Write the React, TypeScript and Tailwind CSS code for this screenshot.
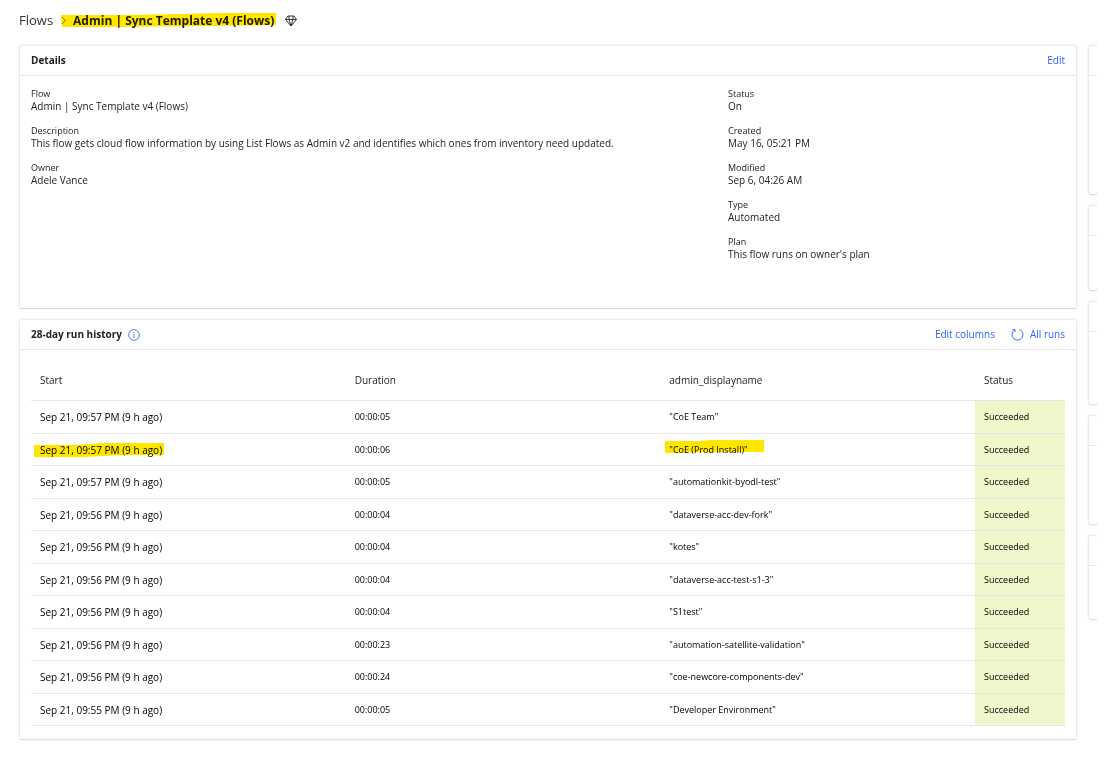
import type { ReactNode } from 'react';

type Run = {
  start: string;
  duration: string;
  name: string;
  marked?: boolean;
};

const runs: Run[] = [
  { start: 'Sep 21, 09:57 PM (9 h ago)', duration: '00:00:05', name: '"CoE Team"' },
  { start: 'Sep 21, 09:57 PM (9 h ago)', duration: '00:00:06', name: '"CoE (Prod Install)"', marked: true },
  { start: 'Sep 21, 09:57 PM (9 h ago)', duration: '00:00:05', name: '"automationkit-byodl-test"' },
  { start: 'Sep 21, 09:56 PM (9 h ago)', duration: '00:00:04', name: '"dataverse-acc-dev-fork"' },
  { start: 'Sep 21, 09:56 PM (9 h ago)', duration: '00:00:04', name: '"kotes"' },
  { start: 'Sep 21, 09:56 PM (9 h ago)', duration: '00:00:04', name: '"dataverse-acc-test-s1-3"' },
  { start: 'Sep 21, 09:56 PM (9 h ago)', duration: '00:00:04', name: '"S1test"' },
  { start: 'Sep 21, 09:56 PM (9 h ago)', duration: '00:00:23', name: '"automation-satellite-validation"' },
  { start: 'Sep 21, 09:56 PM (9 h ago)', duration: '00:00:24', name: '"coe-newcore-components-dev"' },
  { start: 'Sep 21, 09:55 PM (9 h ago)', duration: '00:00:05', name: '"Developer Environment"' },
];

const leftDetails = [
  ['Flow', 'Admin | Sync Template v4 (Flows)'],
  ['Description', 'This flow gets cloud flow information by using List Flows as Admin v2 and identifies which ones from inventory need updated.'],
  ['Owner', 'Adele Vance'],
];

const rightDetails = [
  ['Status', 'On'],
  ['Created', 'May 16, 05:21 PM'],
  ['Modified', 'Sep 6, 04:26 AM'],
  ['Type', 'Automated'],
  ['Plan', "This flow runs on owner's plan"],
];

// Body heights of the side cards, below their 30px headers
const sideCards = ['h-[118px]', 'h-[54px]', 'h-[72px]', 'h-[78px]', 'h-[53px]'];

function Card({ header, children }: { header?: ReactNode; children?: ReactNode }) {
  return (
    <section className="rounded-xs bg-white shadow-[0_0_2px_1px_rgba(0,0,0,0.11),0_1px_1px_rgba(0,0,0,0.06)]">
      <div className="flex h-[30px] items-center justify-between border-b border-[#e6e6e6] px-[11px]">
        {header}
      </div>
      {children}
    </section>
  );
}

function DetailList({ items }: { items: string[][] }) {
  return (
    <dl className="space-y-3">
      {items.map(([label, value]) => (
        <div key={label}>
          <dt className="text-[9px] leading-3 font-medium">{label}</dt>
          <dd className="text-[10px] leading-[13px] whitespace-nowrap">{value}</dd>
        </div>
      ))}
    </dl>
  );
}

function Marker({ className, points, viewBox }: { className: string; points: string; viewBox: string }) {
  return (
    <svg
      className={`pointer-events-none absolute mix-blend-multiply ${className}`}
      viewBox={viewBox}
      preserveAspectRatio="none"
      aria-hidden="true"
    >
      <polygon points={points} fill="#ffe600" />
    </svg>
  );
}

function DiamondIcon() {
  return (
    <svg width="12" height="12" viewBox="0 0 12 12" fill="none" stroke="#333" strokeWidth="1" strokeLinejoin="round">
      <path d="M3 1h6l2.500 3.500L6 11 .5 4.500z" />
      <path d="M.5 4.500h11M4 4.500 6 11l2-6.500M4 4.500V1M8 4.500V1" />
    </svg>
  );
}

function InfoIcon() {
  return (
    <svg width="12" height="12" viewBox="0 0 12 12" fill="none" stroke="#4a6cf0" strokeWidth="0.9">
      <circle cx="6" cy="6" r="5.300" />
      <path d="M6 5v4M6 3v1" />
    </svg>
  );
}

function RefreshIcon() {
  return (
    <svg width="13" height="13" viewBox="0 0 13 13" fill="none" stroke="#2f62f5" strokeWidth="0.9">
      <path d="M8.300 1.400A5.500 5.500 0 1 1 3.200 2.200" />
      <path d="M1.500 1.500h2.500v2.500" />
    </svg>
  );
}

export default function App() {
  return (
    <div className="flex flex-col overflow-hidden bg-white pr-[18px] pb-[26px] font-['Open_Sans','Noto_Sans',sans-serif] text-[#222]">
      <nav className="flex h-[46px] items-start pt-[11px] pl-[19px] text-[13px] leading-[18px]">
        <a href="#" className="text-[#333]">Flows</a>
        <svg className="mt-[5px] ml-2 shrink-0" width="6" height="9" viewBox="0 0 6 9" fill="none" stroke="#8a8420" strokeWidth="1">
          <path d="M1 1l3.500 3.500L1 8" />
        </svg>
        <span className="relative ml-[6px]">
          <h1 className="text-[12px] leading-[19px] font-bold">Admin | Sync Template v4 (Flows)</h1>
          <Marker
            className="top-[2px] left-[-12px] h-[15px] w-[215px]"
            viewBox="0 0 215 15"
            points="0,2 60,2 120,1 160,0 215,0 215,12 150,13 60,14 1,14"
          />
        </span>
        <span className="mt-1 ml-[11px]"><DiamondIcon /></span>
      </nav>

      <div className="flex gap-[13px] pl-5">
        <main className="flex min-w-0 flex-1 flex-col gap-3">
          <Card
            header={
              <>
                <h2 className="text-[10px] font-bold">Details</h2>
                <a href="#" className="text-[10px] text-[#2f62f5]">Edit</a>
              </>
            }
          >
            <div className="flex px-[11px] pt-3 pb-[47px]">
              <div className="flex-1"><DetailList items={leftDetails} /></div>
              <div className="w-[337px]"><DetailList items={rightDetails} /></div>
            </div>
          </Card>

          <Card
            header={
              <>
                <div className="flex items-center gap-[6px]">
                  <h2 className="text-[10px] font-bold">28-day run history</h2>
                  <InfoIcon />
                </div>
                <div className="flex items-center gap-4 text-[10px] text-[#2f62f5]">
                  <button type="button">Edit columns</button>
                  <button type="button" className="flex items-center gap-[6px]">
                    <RefreshIcon />
                    All runs
                  </button>
                </div>
              </>
            }
          >
            <div className="px-[11px] pt-[10px] pb-[13px]">
              <table className="w-full table-fixed border-collapse text-left">
                <thead>
                  <tr className="h-[40px] border-b border-[#e6e6e6] text-[10px]">
                    <th className="px-[9px] pt-px font-medium">Start</th>
                    <th className="px-[9px] pt-px font-medium">Duration</th>
                    <th className="px-[9px] pt-px font-medium">admin_displayname</th>
                    <th className="w-[90px] px-[9px] pt-px font-medium">Status</th>
                  </tr>
                </thead>
                <tbody className="text-[9px] leading-3 text-black">
                  {runs.map((run, i) => (
                    <tr key={i} className="border-b border-[#e6e6e6] odd:h-[33px] even:h-[32px]">
                      <td className="px-[9px] pt-px text-[10px]">
                        <span className="relative">
                          {run.start}
                          {run.marked && (
                            <Marker
                              className="top-0 left-[-6px] h-[15px] w-[130px]"
                              viewBox="0 0 130 15"
                              points="0,2 40,2 70,0 130,0 130,12 90,12 50,14 0,14"
                            />
                          )}
                        </span>
                      </td>
                      <td className="px-[9px] pt-px">{run.duration}</td>
                      <td className="px-[9px] pt-px">
                        <span className="relative">
                          {run.name}
                          {run.marked && (
                            <Marker
                              className="top-[-3px] left-[-4px] h-[13px] w-[99px]"
                              viewBox="0 0 99 13"
                              points="0,1 35,1 45,0 99,0 99,12 60,12 0,13"
                            />
                          )}
                        </span>
                      </td>
                      <td className="bg-[#f1f6cd] px-[9px] pt-px">Succeeded</td>
                    </tr>
                  ))}
                </tbody>
              </table>
            </div>
          </Card>
        </main>

        {/* Side cards, cut off by the edge of the view */}
        <aside className="-my-1 -ml-1 flex w-3 flex-col gap-3 overflow-hidden py-1 pl-1">
          {sideCards.map((height, i) => (
            <Card key={i}>
              <div className={height} />
            </Card>
          ))}
        </aside>
      </div>
    </div>
  );
}
